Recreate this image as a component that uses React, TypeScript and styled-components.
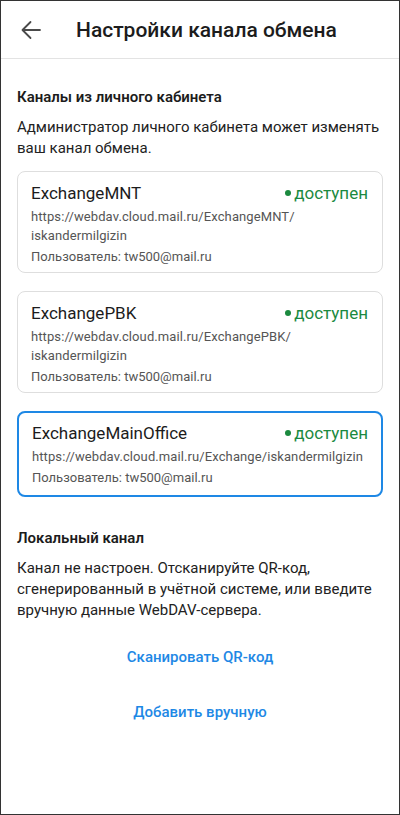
import React from "react";
import styled, { createGlobalStyle } from "styled-components";

const Global = createGlobalStyle`
  html, body { margin: 0; padding: 0; background: #fff; }
  * { box-sizing: border-box; }
  body { font-family: Roboto, "Noto Sans", sans-serif; }
`;

const Screen = styled.div`
  width: 400px;
  height: 815px;
  border: 1px solid #333;
  background: #fff;
  display: flex;
  flex-direction: column;
  overflow: hidden;
`;

const Header = styled.header`
  height: 58px;
  flex-shrink: 0;
  display: flex;
  align-items: center;
  border-bottom: 1px solid #e3e3e3;
  padding-left: 18px;
`;

const BackButton = styled.button`
  width: 24px;
  height: 24px;
  padding: 0;
  border: none;
  background: none;
  display: flex;
  align-items: center;
  justify-content: center;
  color: #4a4a4a;
`;

const Title = styled.h1`
  margin: 0 0 0 33px;
  font-size: 21px;
  font-weight: 500;
  color: #1c1c1c;
`;

const Content = styled.main`
  padding: 28px 16px 0 16px;
  display: flex;
  flex-direction: column;
`;

const SectionTitle = styled.h2<{ $top?: number }>`
  margin: ${(p) => p.$top ?? 0}px 0 0;
  font-size: 15px;
  line-height: 20px;
  font-weight: 600;
  color: #1c1c1c;
`;

const Paragraph = styled.p`
  margin: 10px 0 0;
  font-size: 15px;
  line-height: 21px;
  color: #222;
`;

const CardList = styled.div`
  margin-top: 12px;
  display: flex;
  flex-direction: column;
  gap: 18px;
`;

const Card = styled.div<{ $active?: boolean }>`
  border: ${(p) => (p.$active ? "2px solid #1e88e5" : "1px solid #dedede")};
  border-radius: 8px;
  padding: ${(p) => (p.$active ? "8px 13px 8px 13px" : "9px 14px 6px 13px")};
`;

const CardHead = styled.div`
  display: flex;
  align-items: center;
  justify-content: space-between;
  height: 24px;
`;

const CardName = styled.div`
  font-size: 17px;
  color: #1c1c1c;
`;

const Status = styled.div`
  display: flex;
  align-items: center;
  gap: 3px;
  font-size: 17px;
  color: #1b8a3f;
`;

const Dot = styled.span`
  width: 6px;
  height: 6px;
  border-radius: 50%;
  background: #1b8a3f;
`;

const Url = styled.div`
  margin-top: 2px;
  font-size: 13px;
  line-height: 19px;
  color: #555;
  letter-spacing: 0.1px;
`;

const User = styled.div`
  margin-top: 2px;
  font-size: 13px;
  line-height: 19px;
  color: #555;
`;

const Actions = styled.div`
  margin-top: 25px;
  display: flex;
  flex-direction: column;
  align-items: center;
  gap: 33px;
`;

const LinkButton = styled.button`
  border: none;
  background: none;
  padding: 0;
  font-family: Roboto, sans-serif;
  font-size: 15px;
  line-height: 22px;
  font-weight: 500;
  color: #1e88e5;
`;

const channels = [
  {
    name: "ExchangeMNT",
    url: ["https://webdav.cloud.mail.ru/ExchangeMNT/", "iskandermilgizin"],
  },
  {
    name: "ExchangePBK",
    url: ["https://webdav.cloud.mail.ru/ExchangePBK/", "iskandermilgizin"],
  },
  {
    name: "ExchangeMainOffice",
    url: ["https://webdav.cloud.mail.ru/Exchange/iskandermilgizin"],
    active: true,
  },
];

export default function App() {
  return (
    <>
      <Global />
      <Screen>
        <Header>
          <BackButton aria-label="Назад">
            <svg width="22" height="22" viewBox="0 0 22 22" fill="none">
              <path
                d="M20 11H3M10.5 3L2.5 11L10.5 19"
                stroke="currentColor"
                strokeWidth="1.8"
                strokeLinecap="round"
                strokeLinejoin="round"
              />
            </svg>
          </BackButton>
          <Title>Настройки канала обмена</Title>
        </Header>
        <Content>
          <SectionTitle>Каналы из личного кабинета</SectionTitle>
          <Paragraph>
            Администратор личного кабинета может изменять ваш канал обмена.
          </Paragraph>
          <CardList>
            {channels.map((c) => (
              <Card key={c.name} $active={c.active}>
                <CardHead>
                  <CardName>{c.name}</CardName>
                  <Status>
                    <Dot />
                    доступен
                  </Status>
                </CardHead>
                <Url>
                  {c.url.map((l) => (
                    <div key={l}>{l}</div>
                  ))}
                </Url>
                <User>Пользователь: tw500@mail.ru</User>
              </Card>
            ))}
          </CardList>
          <SectionTitle $top={31}>Локальный канал</SectionTitle>
          <Paragraph>
            Канал не настроен. Отсканируйте QR-код, сгенерированный в учётной
            системе, или введите вручную данные WebDAV-сервера.
          </Paragraph>
          <Actions>
            <LinkButton>Сканировать QR-код</LinkButton>
            <LinkButton>Добавить вручную</LinkButton>
          </Actions>
        </Content>
      </Screen>
    </>
  );
}
